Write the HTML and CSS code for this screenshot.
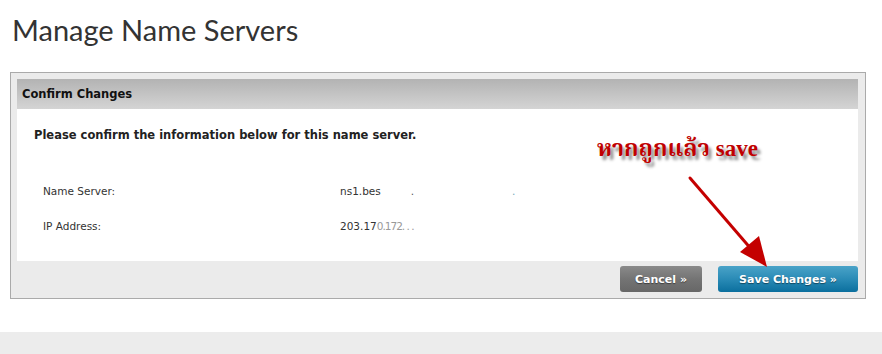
FILE: index.html
```html
<!DOCTYPE html>
<html lang="en">
<head>
  <meta charset="UTF-8">
  <title>Manage Name Servers</title>
  <link rel="stylesheet" href="styles.css">
</head>
<body>
  <div class="page">
    <h1 class="page-title">Manage Name Servers</h1>

    <div class="panel">
      <div class="panel-head">Confirm Changes</div>
      <div class="panel-body">
        <p class="intro">Please confirm the information below for this name server.</p>
        <div class="info-row">
          <span class="info-label">Name Server:</span>
          <span class="info-value">ns1.bes<span class="blur-dot">.</span><span class="blur-dot far">.</span></span>
        </div>
        <div class="info-row">
          <span class="info-label">IP Address:</span>
          <span class="info-value">203.17<span class="faded">0.172. . .</span></span>
        </div>
      </div>
      <div class="panel-foot">
        <button class="btn btn-cancel">Cancel &raquo;</button>
        <button class="btn btn-save">Save Changes &raquo;</button>
      </div>
    </div>
  </div>

  <div class="bottom-band"></div>

  <!-- red note added on the screenshot -->
  <div class="note">หากถูกแล้ว save</div>
  <svg class="arrow" width="120" height="110" viewBox="0 0 120 110">
    <line x1="10" y1="8" x2="72" y2="80" stroke="#c40000" stroke-width="3" stroke-linecap="round"/>
    <polygon points="87,97 60,82 79,66" fill="#c40000"/>
  </svg>
</body>
</html>
```

FILE: styles.css
```css
body {
  margin: 0;
  font-family: Tahoma, "DejaVu Sans", Verdana, sans-serif;
  background: #fff;
  width: 882px;
  height: 354px;
  position: relative;
  overflow: hidden;
}

.page {
  padding: 14px 16px 0 10px;
}

.page-title {
  margin: 0 0 0 2px;
  font-family: Lato, "Open Sans", sans-serif;
  font-weight: normal;
  font-size: 29px;
  line-height: 32px;
  color: #333;
}

.panel {
  margin-top: 26px;
  border: 1px solid #aaa;
  background: #ebebeb;
  padding: 6px 7px 0 6px;
  height: 227px;
  box-sizing: border-box;
  display: flex;
  flex-direction: column;
}

.panel-head {
  flex: none;
  height: 30px;
  line-height: 31px;
  padding-left: 5px;
  font-family: "DejaVu Sans", sans-serif;
  font-weight: bold;
  font-size: 11.5px;
  color: #111;
  background: linear-gradient(#b3b3b3, #d4d4d4);
}

.panel-body {
  flex: none;
  background: #fff;
  height: 152px;
  padding: 19px 0 0 17px;
  box-sizing: border-box;
}

.intro {
  margin: 0 0 43px;
  font-family: "DejaVu Sans", sans-serif;
  font-weight: bold;
  font-size: 11.5px;
  color: #222;
}

.info-row {
  display: flex;
  height: 35px;
  padding-left: 9px;
  font-family: "DejaVu Sans", sans-serif;
  font-size: 10.5px;
  color: #333;
}

.info-label {
  width: 297px;
}

.blur-dot {
  margin-left: 30px;
  color: #555;
}

.blur-dot.far {
  margin-left: 98px;
  color: #7ab;
}

.faded {
  color: #999;
  letter-spacing: -1px;
}

.panel-foot {
  flex: 1;
  display: flex;
  justify-content: flex-end;
  align-items: flex-start;
  gap: 16px;
  padding-top: 5px;
}

.btn {
  height: 26px;
  border: none;
  border-radius: 3px;
  color: #fff;
  font-family: "DejaVu Sans", sans-serif;
  font-weight: bold;
  font-size: 11px;
  text-shadow: 0 1px 1px rgba(0, 0, 0, 0.45);
  cursor: pointer;
}

.btn-cancel {
  width: 82px;
  background: linear-gradient(#8a8a8a, #747474 50%, #676767);
}

.btn-save {
  width: 140px;
  background: linear-gradient(#4aa3c8, #2a8bb6 50%, #0b6f9e);
}

.bottom-band {
  position: absolute;
  left: 0;
  right: 0;
  top: 332px;
  bottom: 0;
  background: #ececec;
}

.note {
  position: absolute;
  left: 597px;
  top: 132px;
  font-family: "Liberation Serif", "Noto Serif Thai", "Noto Sans Thai", serif;
  font-weight: bold;
  font-size: 23px;
  color: #c00000;
  text-shadow: 3px 4px 3px rgba(0, 0, 0, 0.45);
}

.arrow {
  position: absolute;
  left: 680px;
  top: 170px;
}
```
